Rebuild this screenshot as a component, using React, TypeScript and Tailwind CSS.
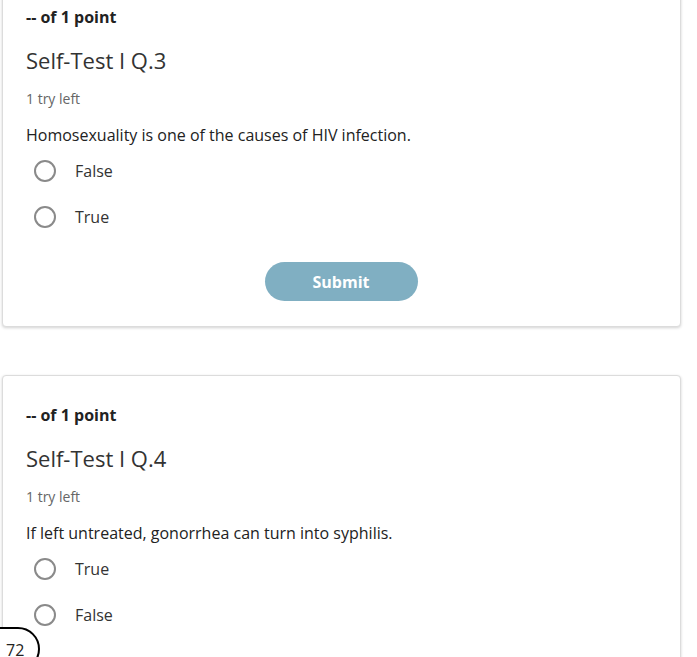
import React, { useState } from "react";

type Question = {
  id: string;
  title: string;
  prompt: string;
  options: string[];
  showSubmit?: boolean;
};

const questions: Question[] = [
  {
    id: "q3",
    title: "Self-Test I Q.3",
    prompt: "Homosexuality is one of the causes of HIV infection.",
    options: ["False", "True"],
    showSubmit: true,
  },
  {
    id: "q4",
    title: "Self-Test I Q.4",
    prompt: "If left untreated, gonorrhea can turn into syphilis.",
    options: ["True", "False"],
    showSubmit: true,
  },
];

const QuestionCard: React.FC<{ q: Question }> = ({ q }) => {
  const [picked, setPicked] = useState<string>("");

  return (
    <section className="ml-[2px] w-[679px] rounded-[4px] border border-[#dcdcdc] bg-white pr-6 pl-[23px] pt-[27px] pb-[25px] shadow-[0_1px_3px_rgba(0,0,0,0.18)]">
      <div className="text-[16px] leading-6 font-bold text-[#222]">-- of 1 point</div>
      <h2 className="mt-[16px] text-[22px] leading-[30px] font-normal text-[#333]">{q.title}</h2>
      <div className="mt-[14px] text-[14px] leading-5 text-[#666]">1 try left</div>
      <p className="mt-[14px] text-[16px] leading-6 text-[#222]">{q.prompt}</p>

      {/* Options */}
      <div className="mt-px flex flex-col">
        {q.options.map((opt) => (
          <label key={opt} className="flex h-[46px] cursor-pointer items-center">
            <span
              onClick={() => setPicked(opt)}
              className="ml-[8px] flex h-[22px] w-[22px] items-center justify-center rounded-full border-2 border-[#8a8a8a]"
            >
              {picked === opt && <span className="h-2.5 w-2.5 rounded-full bg-[#555]" />}
            </span>
            <span className="ml-[19px] text-[16px] text-[#333]">{opt}</span>
          </label>
        ))}
      </div>

      {q.showSubmit && (
        <div className="mt-[22px] flex justify-center">
          <button className="h-[39px] w-[153px] rounded-full bg-[#80afc2] text-[16px] font-bold text-white">
            Submit
          </button>
        </div>
      )}
    </section>
  );
};

export default function App() {
  return (
    <div
      className="relative h-[657px] overflow-hidden bg-white"
      style={{ fontFamily: '"Open Sans", "Noto Sans", sans-serif' }}
    >
      <div className="-mt-[23px] flex flex-col gap-[48px]">
        {questions.map((q) => (
          <QuestionCard key={q.id} q={q} />
        ))}
      </div>

      {/* page counter pill */}
      <div className="absolute top-[627px] -left-[26px] flex h-[44px] w-[66px] items-start rounded-full border-2 border-black bg-white pt-[9px] pl-[30px] text-[16px] text-[#222]">
        72
      </div>
    </div>
  );
}
